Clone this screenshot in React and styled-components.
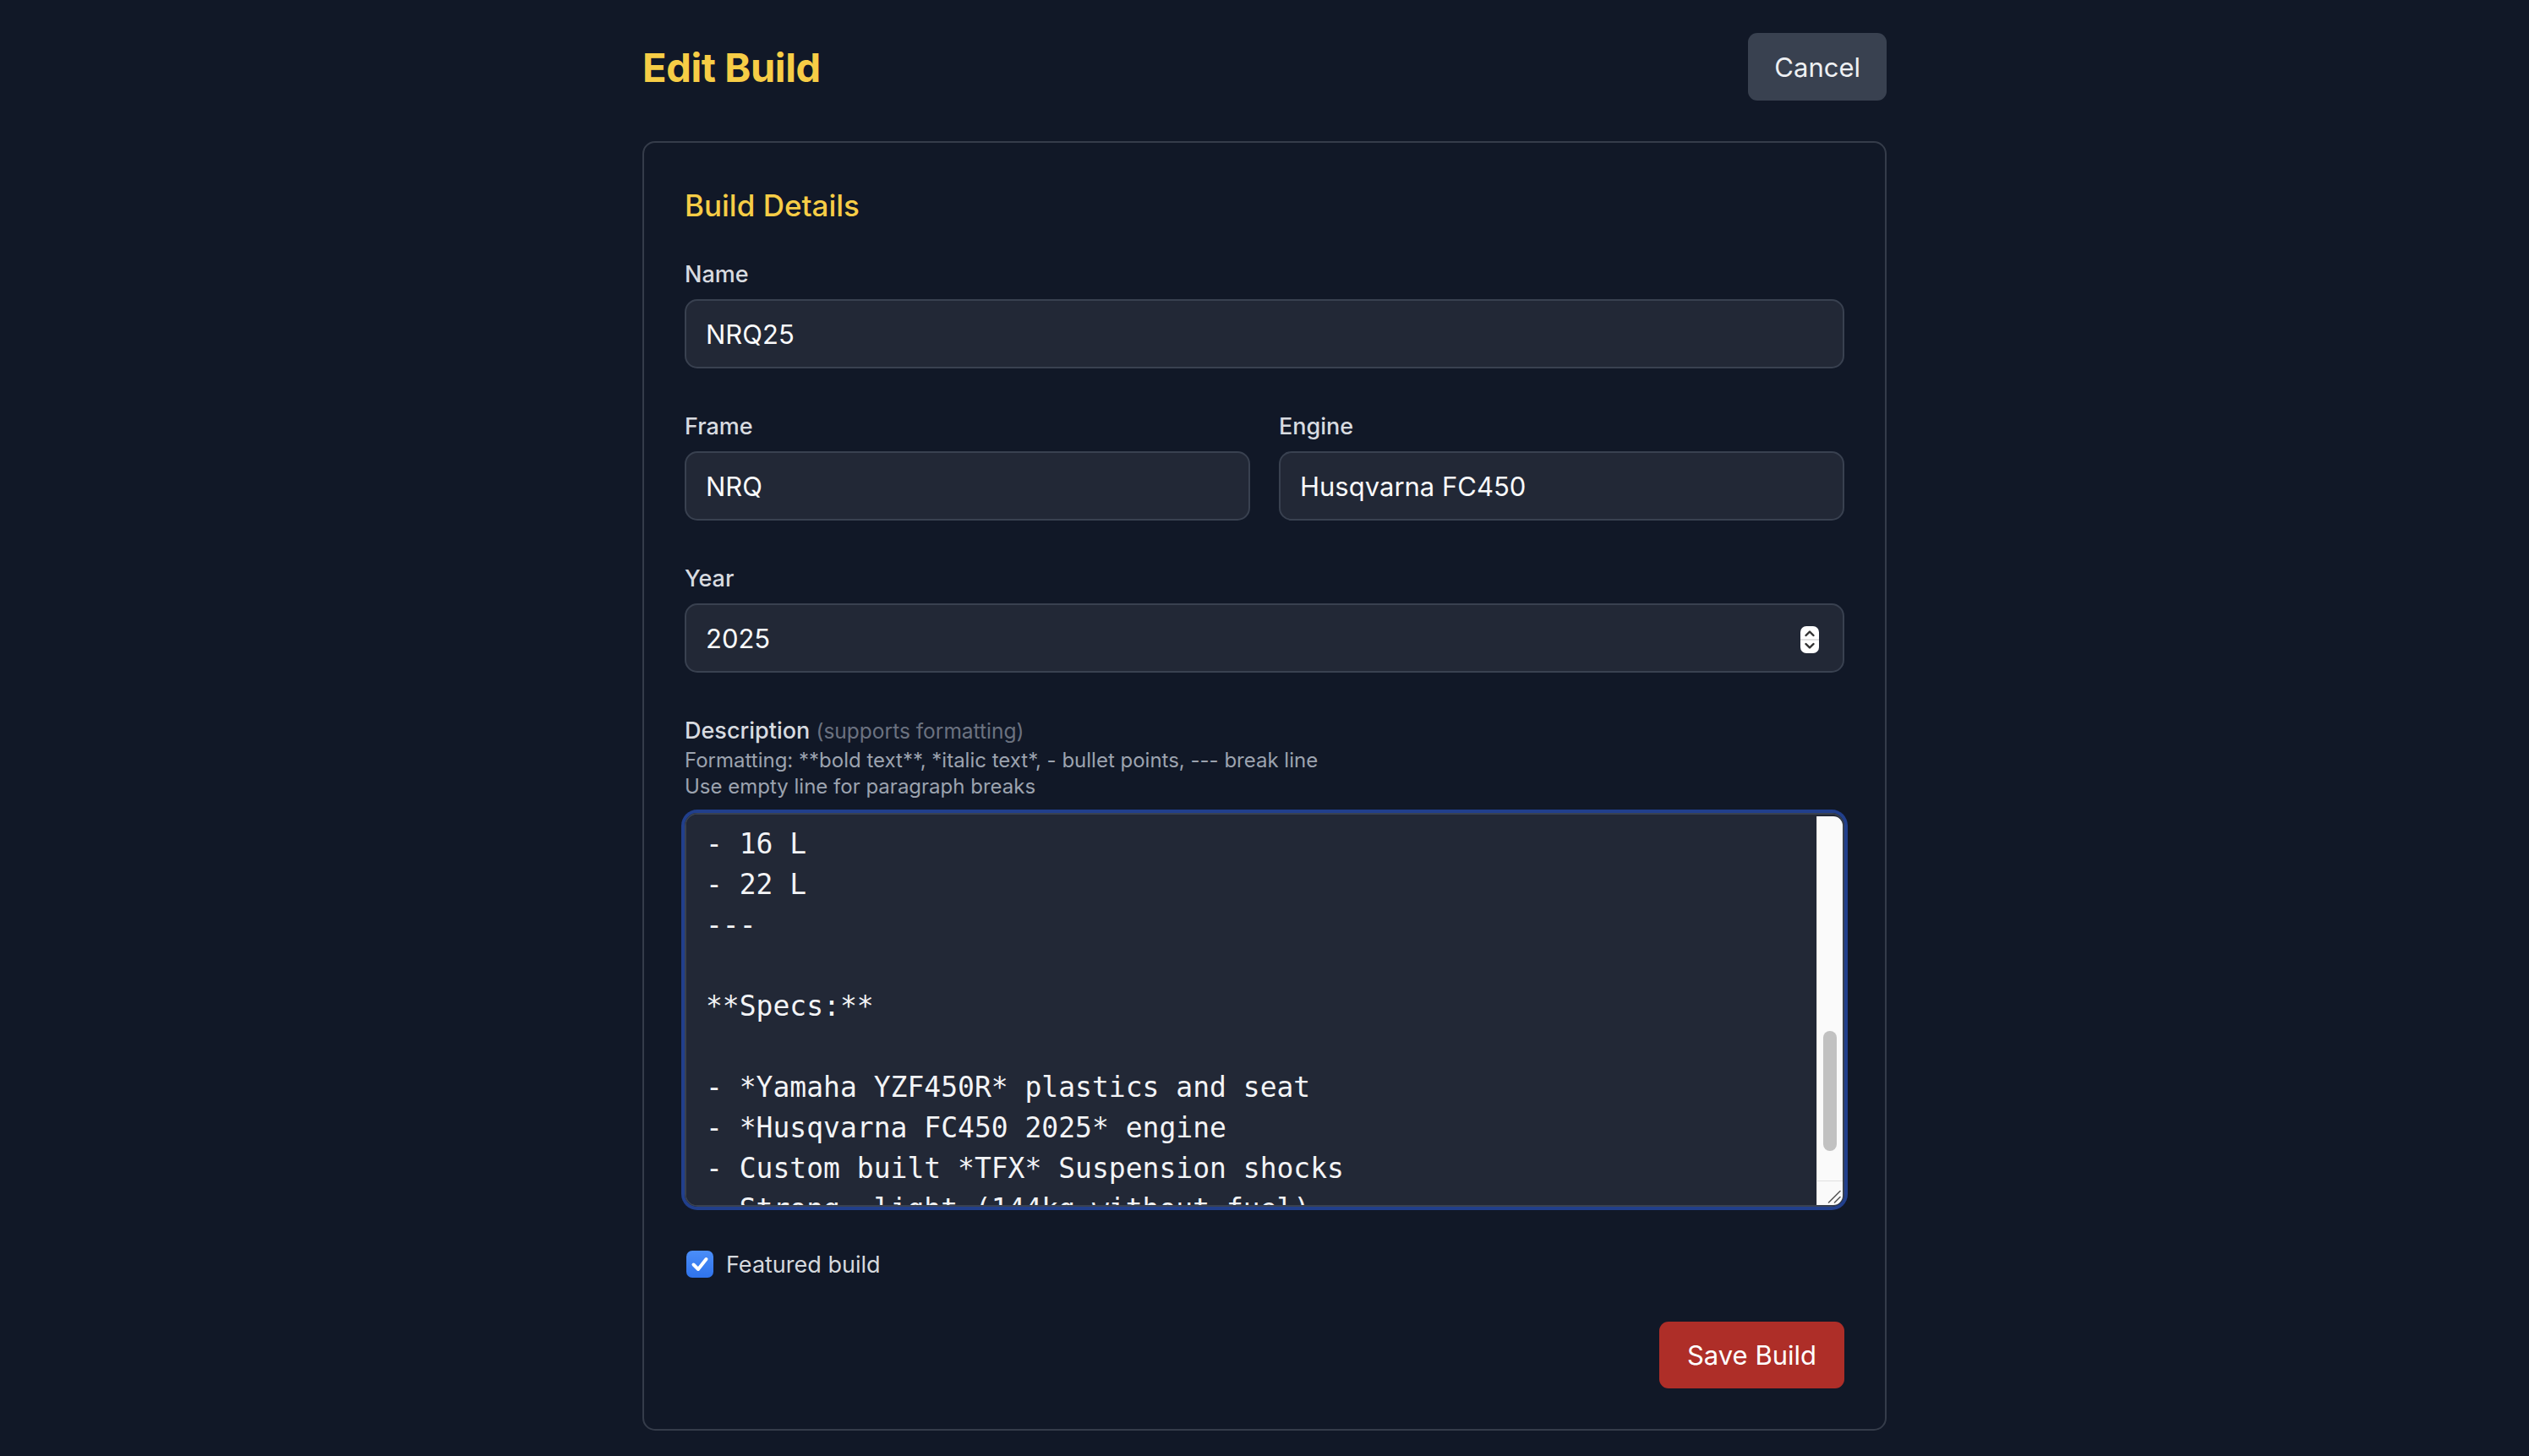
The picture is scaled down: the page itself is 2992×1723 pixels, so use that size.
import React, { useEffect, useRef } from "react";
import styled, { createGlobalStyle } from "styled-components";

const GlobalStyle = createGlobalStyle`
  html, body { margin: 0; padding: 0; background: #111827; }
  body {
    font-family: Inter, "Noto Sans", "Liberation Sans", sans-serif;
    color: #f3f4f6;
    -webkit-font-smoothing: antialiased;
  }
  *, *::before, *::after { box-sizing: border-box; }
`;

const Page = styled.div`
  min-height: 1723px;
  background: #111827;
  padding: 39px 0 24px;
`;

const Container = styled.div`
  width: 1472px;
  margin: 0 auto;
`;

const Header = styled.header`
  display: flex;
  align-items: center;
  justify-content: space-between;
  height: 80px;
  margin-bottom: 48px;
`;

const Title = styled.h1`
  margin: 0;
  font-size: 47px;
  line-height: 1;
  font-weight: 700;
  letter-spacing: -0.4px;
  color: #f7cd46;
`;

const Button = styled.button`
  height: ${(p) => (p.$variant === "danger" ? "79px" : "80px")};
  padding: 0 ${(p) => (p.$variant === "danger" ? "33px" : "31px")};
  border: none;
  border-radius: 11px;
  font-family: inherit;
  font-size: 31px;
  font-weight: 400;
  color: ${(p) => (p.$variant === "danger" ? "#ffffff" : "#eef0f3")};
  background: ${(p) => (p.$variant === "danger" ? "#ae2e28" : "#394150")};
  cursor: pointer;
`;

const Card = styled.section`
  border: 2px solid #353c4a;
  border-radius: 15px;
  padding: 48px;
`;

const SectionTitle = styled.h2`
  margin: 0 0 36px;
  font-size: 35px;
  line-height: 53px;
  font-weight: 500;
  color: #f7cd46;
`;

const Form = styled.form`
  display: flex;
  flex-direction: column;
  gap: 50px;
`;

const Row = styled.div`
  display: grid;
  grid-template-columns: 1fr 1fr;
  column-gap: 34px;
`;

const Field = styled.div`
  display: flex;
  flex-direction: column;
`;

const Label = styled.label`
  display: block;
  font-size: 27px;
  line-height: 38px;
  font-weight: 500;
  color: #d8dbe0;
  margin-bottom: ${(p) => (p.$tight ? "0" : "10px")};
`;

const LabelNote = styled.span`
  font-size: 24.5px;
  font-weight: 400;
  color: #6b7280;
`;

const Hint = styled.div`
  font-size: 24px;
  line-height: 31px;
  color: #9ca3af;
  margin-bottom: 16px;
`;

const InputWrap = styled.div`
  position: relative;
`;

const Input = styled.input`
  width: 100%;
  height: 82px;
  padding: 0 23px;
  border: 2px solid #394150;
  border-radius: 15px;
  background: #222836;
  color: #f9fafb;
  font-family: inherit;
  font-size: 31px;
  outline: none;
  -moz-appearance: textfield;
  &::-webkit-inner-spin-button,
  &::-webkit-outer-spin-button {
    -webkit-appearance: none;
    margin: 0;
  }
`;

const Spinner = styled.svg`
  position: absolute;
  right: 30px;
  top: 27px;
  width: 22px;
  height: 32px;
  pointer-events: none;
`;

const TextArea = styled.textarea`
  display: block;
  width: 100%;
  height: 466px;
  padding: 15px 53px 15px 23px;
  border: 2px solid #394150;
  border-radius: 15px;
  background: #222836;
  color: #f3f4f6;
  font-family: "DejaVu Sans Mono", "Liberation Mono", monospace;
  font-size: 33px;
  line-height: 48px;
  outline: none;
  resize: none;
  overflow-y: scroll;
  overflow-x: hidden;
  scrollbar-width: none;
  box-shadow: ${(p) => (p.$focused ? "0 0 0 4px #213f8c" : "none")};
  &::-webkit-scrollbar { display: none; }
`;

const ScrollTrack = styled.div`
  position: absolute;
  top: 4px;
  right: 2px;
  bottom: 2px;
  width: 31px;
  background: #fafafa;
  border-left: 1px solid #e3e3e3;
  border-radius: 0 11px 11px 0;
  pointer-events: none;
`;

const ScrollThumb = styled.div`
  position: absolute;
  top: ${(p) => p.$top}px;
  left: 7px;
  width: 16px;
  height: ${(p) => p.$height}px;
  border-radius: 8px;
  background: #c1c1c1;
`;

const ResizeCorner = styled.div`
  position: absolute;
  left: 0;
  right: 0;
  bottom: 0;
  height: 29px;
  border-top: 1px solid #e0e0e0;
  display: flex;
  align-items: flex-end;
  justify-content: flex-end;
  padding: 0 2px 2px 0;
`;

const CheckRow = styled.label`
  display: flex;
  align-items: center;
  gap: 15px;
  height: 36px;
  font-size: 27px;
  color: #d6d9de;
  cursor: pointer;
`;

const CheckBox = styled.span`
  display: inline-flex;
  align-items: center;
  justify-content: center;
  width: 32px;
  height: 32px;
  margin-left: 2px;
  border-radius: 7px;
  background: ${(p) => (p.$checked ? "linear-gradient(#4b8ef8, #2f73ec)" : "#1f2937")};
`;

const Actions = styled.div`
  display: flex;
  justify-content: flex-end;
`;

const description = [
  "The **NRQ25** is our latest custom build, combining",
  "the proven *NRQ* frame with a brand new engine.",
  "",
  "Designed for *enduro* riding and long days on the",
  "trail, it is light, agile and easy to handle.",
  "",
  "---",
  "",
  "**Available colors:**",
  "",
  "- Black / Yellow",
  "- White / Red",
  "- Full black",
  "",
  "**Fuel tank options:**",
  "",
  "- 10 L",
  "- 16 L",
  "- 22 L",
  "---",
  "",
  "**Specs:**",
  "",
  "- *Yamaha YZF450R* plastics and seat",
  "- *Husqvarna FC450 2025* engine",
  "- Custom built *TFX* Suspension shocks",
  "- Strong, light (144kg without fuel)",
  "- Road legal with plates and lights",
].join("\n");

export default function App() {
  const areaRef = useRef(null);

  useEffect(() => {
    if (areaRef.current) areaRef.current.scrollTop = 820;
  }, []);

  return (
    <Page>
      <GlobalStyle />
      <Container>
        <Header>
          <Title>Edit Build</Title>
          <Button type="button">Cancel</Button>
        </Header>

        <Card>
          <SectionTitle>Build Details</SectionTitle>
          <Form onSubmit={(e) => e.preventDefault()}>
            <Field>
              <Label htmlFor="name">Name</Label>
              <Input id="name" defaultValue="NRQ25" />
            </Field>

            <Row>
              <Field>
                <Label htmlFor="frame">Frame</Label>
                <Input id="frame" defaultValue="NRQ" />
              </Field>
              <Field>
                <Label htmlFor="engine">Engine</Label>
                <Input id="engine" defaultValue="Husqvarna FC450" />
              </Field>
            </Row>

            <Field>
              <Label htmlFor="year">Year</Label>
              <InputWrap>
                <Input id="year" type="number" defaultValue={2025} />
                <Spinner viewBox="0 0 22 32" aria-hidden="true">
                  <rect x="0" y="0" width="22" height="32" rx="7" fill="#ffffff" />
                  <line x1="0" y1="16" x2="22" y2="16" stroke="#d9d9d9" strokeWidth="1.5" />
                  <polyline points="6.5,11 11,6.5 15.5,11" fill="none" stroke="#303030" strokeWidth="2.4" strokeLinecap="round" strokeLinejoin="round" />
                  <polyline points="6.5,21 11,25.5 15.5,21" fill="none" stroke="#303030" strokeWidth="2.4" strokeLinecap="round" strokeLinejoin="round" />
                </Spinner>
              </InputWrap>
            </Field>

            <Field>
              <Label htmlFor="description" $tight>
                Description <LabelNote>(supports formatting)</LabelNote>
              </Label>
              <Hint>
                <div>Formatting: **bold text**, *italic text*, - bullet points, --- break line</div>
                <div>Use empty line for paragraph breaks</div>
              </Hint>
              <InputWrap>
                <TextArea
                  id="description"
                  ref={areaRef}
                  $focused
                  spellCheck={false}
                  defaultValue={description}
                />
                <ScrollTrack aria-hidden="true">
                  <ScrollThumb $top={254} $height={142} />
                  <ResizeCorner>
                    <svg width="16" height="16" viewBox="0 0 16 16">
                      <line x1="1.5" y1="15" x2="15" y2="1.5" stroke="#5a5a5a" strokeWidth="1.6" strokeLinecap="round" />
                      <line x1="8.5" y1="15" x2="15" y2="8.5" stroke="#5a5a5a" strokeWidth="1.6" strokeLinecap="round" />
                    </svg>
                  </ResizeCorner>
                </ScrollTrack>
              </InputWrap>
            </Field>

            <CheckRow>
              <CheckBox $checked>
                <svg width="24" height="24" viewBox="0 0 24 24" aria-hidden="true">
                  <polyline points="4.5,12.5 10,18 19.5,6" fill="none" stroke="#ffffff" strokeWidth="4" strokeLinecap="round" strokeLinejoin="round" />
                </svg>
              </CheckBox>
              Featured build
            </CheckRow>

            <Actions>
              <Button type="submit" $variant="danger">Save Build</Button>
            </Actions>
          </Form>
        </Card>
      </Container>
    </Page>
  );
}
